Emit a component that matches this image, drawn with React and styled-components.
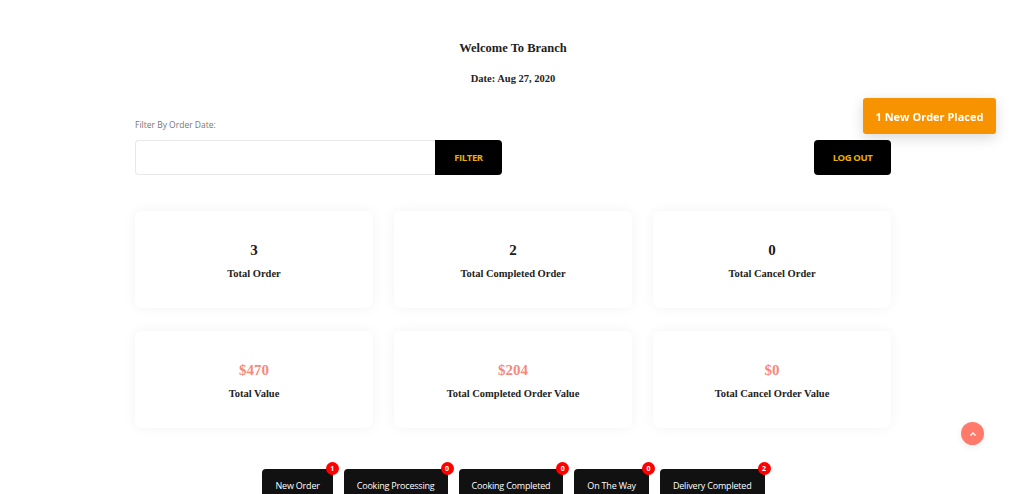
import React from "react";
import styled, { createGlobalStyle } from "styled-components";

const Global = createGlobalStyle`
  html, body { margin: 0; padding: 0; background: #fff; }
  body { font-family: "Open Sans", "Liberation Sans", sans-serif; overflow: hidden; }
  * { box-sizing: border-box; }
`;

const serif = `"Liberation Serif", "DejaVu Serif", serif`;
const sans = `"Open Sans", "Liberation Sans", sans-serif`;

const Page = styled.div`
  width: 758px;
  margin: 0 auto;
  padding: 41px 0 0 2px;
`;

const Header = styled.div`
  display: flex;
  flex-direction: column;
  align-items: center;
  gap: 17px;
  font-family: ${serif};
  color: #222;
`;

const Title = styled.h1`
  margin: 0;
  font-size: 12.5px;
  line-height: 14px;
  font-weight: 700;
`;

const DateText = styled.div`
  font-size: 10.5px;
  line-height: 14px;
  font-weight: 700;
`;

const FilterLabel = styled.div`
  margin-top: 33px;
  font-family: ${sans};
  font-size: 8.5px;
  color: #777;
  line-height: 12px;
`;

const FilterRow = styled.div`
  display: flex;
  justify-content: space-between;
  margin-top: 9px;
`;

const FilterGroup = styled.div`
  display: flex;
`;

const DateInput = styled.input`
  width: 300px;
  height: 35px;
  border: 1px solid #e8e8e8;
  border-right: none;
  border-radius: 4px 0 0 4px;
  outline: none;
`;

const DarkButton = styled.button`
  height: 35px;
  width: ${(p) => p.$w}px;
  background: #000;
  color: #e8b100;
  border: none;
  border-radius: ${(p) => (p.$joined ? "0 4px 4px 0" : "4px")};
  font-family: ${sans};
  font-weight: 700;
  font-size: 9.5px;
  letter-spacing: -0.4px;
  cursor: pointer;
`;

const Grid = styled.div`
  display: grid;
  grid-template-columns: repeat(3, 238px);
  justify-content: space-between;
  row-gap: 23px;
  margin-top: 36px;
`;

const Card = styled.div`
  height: 97px;
  background: #fff;
  border-radius: 7px;
  box-shadow: 0 0 14px rgba(0, 0, 0, 0.05);
  display: flex;
  flex-direction: column;
  align-items: center;
  justify-content: center;
  gap: 10px;
  font-family: ${serif};
  padding-top: 2px;
`;

const Value = styled.div`
  font-size: 15px;
  font-weight: 700;
  line-height: 16px;
  color: ${(p) => (p.$money ? "#f58a7d" : "#1a1a1a")};
`;

const Label = styled.div`
  font-size: 10.5px;
  font-weight: 700;
  color: #222;
  line-height: 12px;
`;

const Tabs = styled.div`
  display: flex;
  justify-content: center;
  gap: 11px;
  margin-top: 41px;
  padding-left: 1px;
`;

const Tab = styled.div`
  position: relative;
  background: #111;
  color: #fff;
  font-family: ${sans};
  font-size: 9px;
  padding: 10px 13px 14px;
  border-radius: 4px 4px 0 0;
  white-space: nowrap;
  letter-spacing: -0.2px;
`;

const Badge = styled.span`
  position: absolute;
  top: -7px;
  right: -6px;
  width: 13px;
  height: 13px;
  border-radius: 50%;
  background: #f00;
  color: #fff;
  font-size: 7px;
  font-weight: 700;
  display: flex;
  align-items: center;
  justify-content: center;
  letter-spacing: 0;
`;

const Toast = styled.div`
  position: fixed;
  top: 98px;
  left: 863px;
  width: 133px;
  height: 36px;
  background: #f79200;
  color: #fff;
  border-radius: 3px;
  font-family: ${sans};
  font-weight: 700;
  font-size: 11px;
  display: flex;
  align-items: center;
  justify-content: center;
  box-shadow: 0 4px 14px rgba(0, 0, 0, 0.15);
`;

const ScrollTop = styled.div`
  position: fixed;
  left: 961px;
  top: 422px;
  width: 23px;
  height: 23px;
  border-radius: 50%;
  background: #ff7a6b;
  display: flex;
  align-items: center;
  justify-content: center;
  box-shadow: 0 2px 6px rgba(0, 0, 0, 0.08);
`;

const stats = [
  { v: "3", l: "Total Order" },
  { v: "2", l: "Total Completed Order" },
  { v: "0", l: "Total Cancel Order" },
  { v: "$470", l: "Total Value", m: true },
  { v: "$204", l: "Total Completed Order Value", m: true },
  { v: "$0", l: "Total Cancel Order Value", m: true },
];

const tabs = [
  ["New Order", 1],
  ["Cooking Processing", 0],
  ["Cooking Completed", 0],
  ["On The Way", 0],
  ["Delivery Completed", 2],
];

export default function App() {
  return (
    <>
      <Global />
      <Page>
        <Header>
          <Title>Welcome To Branch</Title>
          <DateText>Date: Aug 27, 2020</DateText>
        </Header>
        <FilterLabel>Filter By Order Date:</FilterLabel>
        <FilterRow>
          <FilterGroup>
            <DateInput type="text" />
            <DarkButton $w={67} $joined>FILTER</DarkButton>
          </FilterGroup>
          <DarkButton $w={77}>LOG OUT</DarkButton>
        </FilterRow>
        <Grid>
          {stats.map((s) => (
            <Card key={s.l}>
              <Value $money={s.m}>{s.v}</Value>
              <Label>{s.l}</Label>
            </Card>
          ))}
        </Grid>
        <Tabs>
          {tabs.map(([t, n]) => (
            <Tab key={t}>
              {t}
              <Badge>{n}</Badge>
            </Tab>
          ))}
        </Tabs>
      </Page>
      <Toast>1 New Order Placed</Toast>
      <ScrollTop>
        <svg width="8" height="6" viewBox="0 0 8 6">
          <path d="M1.5 4.5 L4 2 L6.5 4.5" stroke="#fff" strokeWidth="1.3" fill="none" />
        </svg>
      </ScrollTop>
    </>
  );
}
